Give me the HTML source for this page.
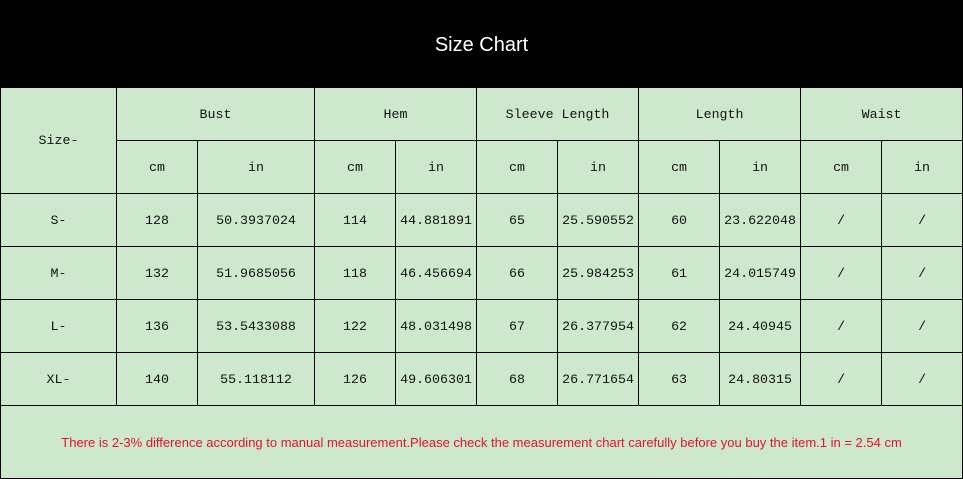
<!DOCTYPE html>
<html><head><style>
body{margin:0;width:963px;height:479px;overflow:hidden;background:#cde8cd;position:relative}
.hd{position:absolute;left:0;top:0;width:963px;height:87px;background:#000;color:#fff;font:20px "Liberation Sans",sans-serif;text-align:center;line-height:90px}
table{position:absolute;left:0;top:87px;width:962px;border-collapse:collapse;table-layout:fixed;font:13.3px "Liberation Mono",monospace;color:#111}
td{border:1px solid #000;text-align:center;height:52px;padding:0;white-space:nowrap;overflow:hidden}
td.f{height:72px;color:#e8102a;font:13px "Liberation Sans",sans-serif}
</style></head><body>
<div class="hd">Size Chart</div>
<table>
<colgroup><col style="width:116px"><col style="width:81px"><col style="width:117px"><col style="width:81px"><col style="width:81px"><col style="width:81px"><col style="width:81px"><col style="width:81px"><col style="width:81px"><col style="width:81px"><col style="width:81px"></colgroup>
<tr><td rowspan="2">Size-</td><td colspan="2">Bust</td><td colspan="2">Hem</td><td colspan="2">Sleeve Length</td><td colspan="2">Length</td><td colspan="2">Waist</td></tr>
<tr><td>cm</td><td>in</td><td>cm</td><td>in</td><td>cm</td><td>in</td><td>cm</td><td>in</td><td>cm</td><td>in</td></tr>
<tr><td>S-</td><td>128</td><td>50.3937024</td><td>114</td><td>44.881891</td><td>65</td><td>25.590552</td><td>60</td><td>23.622048</td><td>/</td><td>/</td></tr>
<tr><td>M-</td><td>132</td><td>51.9685056</td><td>118</td><td>46.456694</td><td>66</td><td>25.984253</td><td>61</td><td>24.015749</td><td>/</td><td>/</td></tr>
<tr><td>L-</td><td>136</td><td>53.5433088</td><td>122</td><td>48.031498</td><td>67</td><td>26.377954</td><td>62</td><td>24.40945</td><td>/</td><td>/</td></tr>
<tr><td>XL-</td><td>140</td><td>55.118112</td><td>126</td><td>49.606301</td><td>68</td><td>26.771654</td><td>63</td><td>24.80315</td><td>/</td><td>/</td></tr>
<tr><td class="f" colspan="11">There is 2-3% difference according to manual measurement.Please check the measurement chart carefully before you buy the item.1 in = 2.54 cm</td></tr>
</table>
</body></html>
